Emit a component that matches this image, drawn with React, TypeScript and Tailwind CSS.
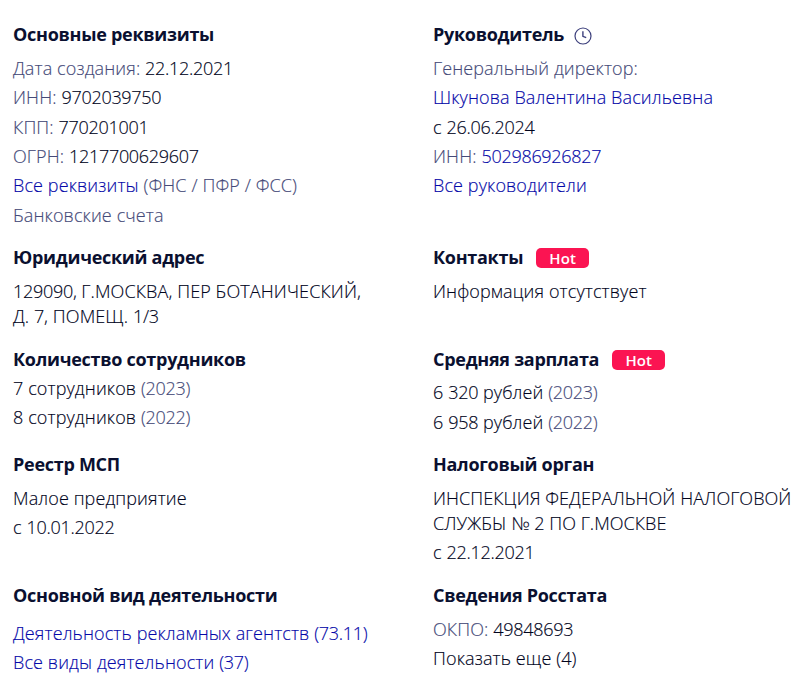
import React from 'react'

function Title({ children }: { children: React.ReactNode }) {
    return <h3 className="flex h-[25px] items-center text-[18px] leading-[25px] font-bold tracking-[-0.28px] text-[#0a1030] [-webkit-text-stroke:0]">{children}</h3>
}

function Hot() {
    return (
        <span className="ml-[13px] flex h-5 w-[53px] items-center justify-center rounded-[5px] bg-[#fb1452] pt-px text-[15px] leading-5 font-semibold tracking-[0.1px] text-white">
            Hot
        </span>
    )
}

function ClockIcon() {
    return (
        <svg className="mt-[3px] ml-[10px] h-[18px] w-[18px]" viewBox="0 0 18 18" fill="none" stroke="#3c3f7c">
            <circle cx="9" cy="9" r="8" strokeWidth="1.2" />
            <path d="M8.9 4.3V9.3L12.2 10.7" strokeWidth="1.4" />
        </svg>
    )
}

function Muted({ children }: { children: React.ReactNode }) {
    return <span className="text-[#454a78]">{children}</span>
}

function LinkText({ children }: { children: React.ReactNode }) {
    return <a href="#" className="text-[#0508a8]">{children}</a>
}

// digits are set a little tighter than the letters
function Num({ children }: { children: React.ReactNode }) {
    return <span className="tracking-[-0.28px]">{children}</span>
}

function Line({ children }: { children: React.ReactNode }) {
    return <p className="h-[25px] whitespace-nowrap">{children}</p>
}

export default function App() {
    return (
        <main
            className="grid h-[682px] w-[804px] grid-cols-[420px_371px] content-start overflow-hidden bg-white pt-[22px] pl-[13px] text-[18px] leading-[25px] font-light tracking-[0.11px] text-[#00031c] [-webkit-text-stroke:0.15px]"
            style={{ fontFamily: '"Open Sans", sans-serif' }}
        >
            <section className="h-[223px]">
                <Title>Основные реквизиты</Title>
                <div className="mt-[9px] flex flex-col gap-[4.33px]">
                    <Line><Muted>Дата создания:</Muted> <Num>22.12.2021</Num></Line>
                    <Line><Muted>ИНН:</Muted> <Num>9702039750</Num></Line>
                    <Line><Muted>КПП:</Muted> <Num>770201001</Num></Line>
                    <Line><Muted>ОГРН:</Muted> <Num>1217700629607</Num></Line>
                    <Line><LinkText>Все реквизиты</LinkText> <Muted>(ФНС / ПФР / ФСС)</Muted></Line>
                    <Line><Muted>Банковские счета</Muted></Line>
                </div>
            </section>
            <section className="h-[223px]">
                <Title>Руководитель<ClockIcon /></Title>
                <div className="mt-[9px] flex flex-col gap-[4.33px]">
                    <Line><Muted>Генеральный директор:</Muted></Line>
                    <Line><LinkText>Шкунова Валентина Васильевна</LinkText></Line>
                    <Line>с <Num>26.06.2024</Num></Line>
                    <Line><Muted>ИНН:</Muted> <LinkText><Num>502986926827</Num></LinkText></Line>
                    <Line><LinkText>Все руководители</LinkText></Line>
                </div>
            </section>

            <section className="h-[102px]">
                <Title>Юридический адрес</Title>
                <div className="mt-[9px]">
                    <Line><Num>129090,</Num> Г.МОСКВА, ПЕР БОТАНИЧЕСКИЙ,</Line>
                    <Line>Д. <Num>7</Num>, ПОМЕЩ. <Num>1/3</Num></Line>
                </div>
            </section>
            <section className="h-[102px]">
                <Title>Контакты<Hot /></Title>
                <div className="mt-[9px]">
                    <Line>Информация отсутствует</Line>
                </div>
            </section>

            <section className="h-[105px]">
                <Title>Количество сотрудников</Title>
                <div className="mt-1 flex flex-col gap-1">
                    <Line>7 сотрудников <Muted><Num>(2023)</Num></Muted></Line>
                    <Line>8 сотрудников <Muted><Num>(2022)</Num></Muted></Line>
                </div>
            </section>
            <section className="h-[105px]">
                <Title>Средняя зарплата<Hot /></Title>
                <div className="mt-2 flex flex-col gap-[5px]">
                    <Line>6 <Num>320</Num> рублей <Muted><Num>(2023)</Num></Muted></Line>
                    <Line>6 <Num>958</Num> рублей <Muted><Num>(2022)</Num></Muted></Line>
                </div>
            </section>

            <section className="h-[131px]">
                <Title>Реестр МСП</Title>
                <div className="mt-[9px] flex flex-col gap-1">
                    <Line>Малое предприятие</Line>
                    <Line>с <Num>10.01.2022</Num></Line>
                </div>
            </section>
            <section className="h-[131px]">
                <Title>Налоговый орган</Title>
                <div className="mt-[9px]">
                    <p className="h-[25px] tracking-[0.07px] whitespace-nowrap">ИНСПЕКЦИЯ ФЕДЕРАЛЬНОЙ НАЛОГОВОЙ</p>
                    <p className="h-[25px] tracking-[0.05px] whitespace-nowrap">СЛУЖБЫ № 2 ПО Г.МОСКВЕ</p>
                    <div className="mt-1"><Line>с <Num>22.12.2021</Num></Line></div>
                </div>
            </section>

            <section>
                <Title>Основной вид деятельности</Title>
                <div className="mt-[13px] flex flex-col gap-1">
                    <Line><LinkText>Деятельность рекламных агентств <Num>(73.11)</Num></LinkText></Line>
                    <Line><LinkText>Все виды деятельности <Num>(37)</Num></LinkText></Line>
                </div>
            </section>
            <section>
                <Title>Сведения Росстата</Title>
                <div className="mt-[9px] flex flex-col gap-1">
                    <Line><Muted>ОКПО:</Muted> <Num>49848693</Num></Line>
                    <Line>Показать еще (4)</Line>
                </div>
            </section>
        </main>
    )
}
